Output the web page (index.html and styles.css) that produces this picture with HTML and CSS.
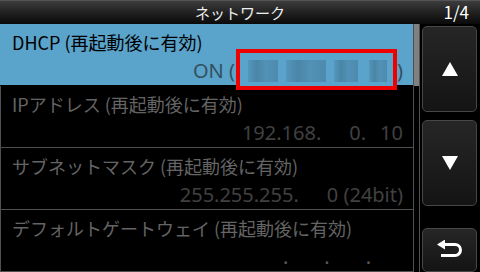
FILE: index.html
```html
<!doctype html>
<html lang="ja">
<head>
	<meta charset="UTF-8">
	<title>ネットワーク</title>
	<link rel="stylesheet" href="styles.css">
</head>
<body>
	<div class="screen">
		<div class="titlebar">
			<span class="title">ネットワーク</span>
			<span class="page">1/4</span>
		</div>
		<div class="main">
			<div class="list">
				<div class="row selected">
					<div class="label">DHCP (再起動後に有効)</div>
					<div class="value">ON (<span class="hidden"></span>)</div>
					<div class="mask">
						<i class="px a"></i><i class="px b"></i><i class="px c"></i><i class="px d"></i>
					</div>
				</div>
				<div class="row">
					<div class="label">IPアドレス (再起動後に有効)</div>
					<div class="value">192.168.<span class="sp"></span><span class="sp"></span>0.<span class="sp"></span>10</div>
				</div>
				<div class="row">
					<div class="label">サブネットマスク (再起動後に有効)</div>
					<div class="value">255.255.255.<span class="sp"></span><span class="sp"></span>0 (24bit)</div>
				</div>
				<div class="row">
					<div class="label">デフォルトゲートウェイ (再起動後に有効)</div>
					<div class="value dots"><span class="blank"></span>.<span class="blank"></span>.<span class="blank"></span>.<span class="blank last"></span></div>
				</div>
			</div>
			<div class="scroll"><div class="thumb"></div></div>
			<div class="buttons">
				<div class="btn tall"><span class="tri up"></span></div>
				<div class="btn tall"><span class="tri down"></span></div>
				<div class="btn back">
					<svg width="28" height="20" viewBox="0 0 28 20">
						<path d="M8 4.5 H19 A5.5 5.5 0 0 1 19 15.5 H5" fill="none" stroke="#fff" stroke-width="3"/>
						<path d="M1 4.5 L9 -0.5 L9 9.5 Z" fill="#fff"/>
					</svg>
				</div>
			</div>
		</div>
	</div>
</body>
</html>
```

FILE: styles.css
```css
*{
	padding:0;
	margin:0;
	box-sizing:border-box;
}
body{
	background:#000;
	font-family:"Noto Sans CJK JP","Noto Sans",sans-serif;
}
.screen{
	width:480px;
	height:272px;
	display:flex;
	flex-direction:column;
	overflow:hidden;
}
.titlebar{
	height:24px;
	flex:none;
	display:flex;
	align-items:center;
	justify-content:center;
	position:relative;
	background:linear-gradient(#3c3c3c,#1c1c1c 60%,#0a0a0a);
	border-top:1px solid #555;
	color:#eee;
	font-size:15px;
}
.title{
	line-height:22px;
}
.page{
	position:absolute;
	right:11px;
	top:0;
	line-height:22px;
	font-size:17px;
	color:#fff;
}
.main{
	flex:1;
	display:flex;
}
.list{
	width:413px;
	display:flex;
	flex-direction:column;
	border-left:1px solid #505050;
}
.row{
	height:62px;
	border-bottom:1px solid #505050;
	padding:4px 10px 0 11px;
	position:relative;
}
.row.selected{
	background:#5aa3cb;
	border-bottom-color:#000;
	margin-left:-1px;
	padding-left:12px;
}
.label{
	font-size:18px;
	line-height:28px;
	color:#646464;
	white-space:nowrap;
}
.value{
	font-family:"Noto Sans","Noto Sans CJK JP",sans-serif;
	font-size:20px;
	line-height:29px;
	color:#414141;
	text-align:right;
	white-space:pre;
}
.sp{
	display:inline-block;
	width:14px;
}
.blank{
	display:inline-block;
	width:36px;
}
.blank.last{
	width:32px;
}
.selected .label{
	color:#000;
}
.selected .value{
	color:#34505f;
}
.hidden{
	display:inline-block;
	width:162px;
}
.dots{
	color:#5a5a5a;
}
.mask{
	position:absolute;
	left:236px;
	top:25px;
	width:161px;
	height:41px;
	border:4px solid #ee0000;
	background:#5aa3cb;
	display:flex;
	align-items:center;
	padding:2px 6px 0 8px;
	gap:8px;
}
.px{
	display:block;
	height:22px;
	background:linear-gradient(90deg,#5497bd,#4a85a6 30%,#5292b6 60%,#4d8aad);
}
.px.a{width:30px;}
.px.b{width:40px;}
.px.c{width:24px;}
.px.d{width:18px;margin-left:auto;}
.scroll{
	width:7px;
	border-left:1px solid #505050;
	border-right:1px solid #505050;
}
.thumb{
	height:62px;
	background:#808080;
}
.buttons{
	flex:1;
	display:flex;
	flex-direction:column;
	padding:2px 3px 0 2px;
}
.btn{
	border:1px solid #474747;
	border-radius:5px;
	background:linear-gradient(#262626,#141414);
	display:flex;
	align-items:center;
	justify-content:center;
}
.btn.tall{
	height:86px;
	margin-bottom:8px;
}
.btn.back{
	height:44px;
	margin-top:14px;
}
.tri{
	width:0;
	height:0;
	border-left:8px solid transparent;
	border-right:8px solid transparent;
}
.tri.up{
	border-bottom:14px solid #fff;
}
.tri.down{
	border-top:14px solid #fff;
}
```
